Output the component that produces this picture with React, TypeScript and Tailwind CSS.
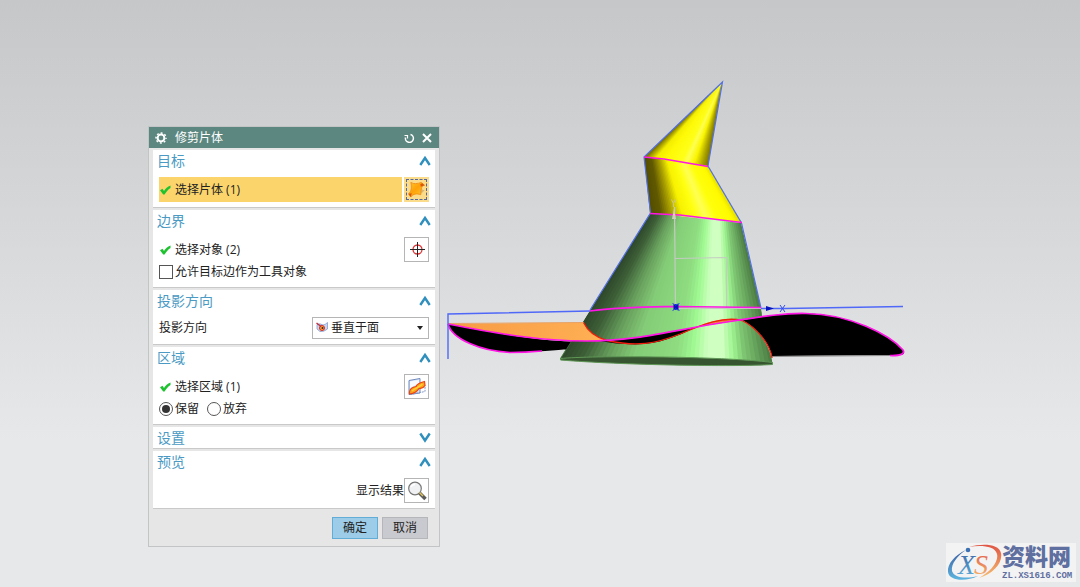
import { useState, type ReactNode } from "react";

type Point = [number, number];
type Stop = [number, number, number, number];

const STRIPS = 48;

const greenStops: Stop[] = [
  [0, 44, 70, 42],
  [0.1, 62, 95, 56],
  [0.22, 103, 158, 92],
  [0.34, 132, 204, 119],
  [0.54, 142, 220, 128],
  [0.62, 160, 250, 146],
  [0.69, 208, 255, 194],
  [0.76, 208, 255, 194],
  [0.81, 160, 246, 146],
  [0.86, 128, 200, 116],
  [0.93, 100, 160, 90],
  [1, 72, 120, 65],
];

const tipStops: Stop[] = [
  [0, 106, 100, 0],
  [0.08, 170, 162, 0],
  [0.18, 244, 238, 0],
  [0.34, 255, 250, 6],
  [0.58, 255, 255, 24],
  [0.66, 255, 255, 84],
  [0.78, 250, 244, 0],
  [0.9, 176, 168, 0],
  [1, 122, 114, 0],
];

const neckStops: Stop[] = [
  [0, 82, 76, 0],
  [0.12, 98, 90, 0],
  [0.24, 170, 160, 0],
  [0.36, 248, 242, 0],
  [0.5, 255, 255, 14],
  [0.62, 255, 255, 84],
  [0.74, 255, 255, 12],
  [0.92, 255, 250, 0],
  [1, 226, 218, 0],
];

const colorAt = (stops: Stop[], t: number) => {
  const i = Math.max(1, stops.findIndex((s) => s[0] >= t));
  const a = stops[i - 1];
  const b = stops[i];
  const k = (t - a[0]) / (b[0] - a[0]);
  const mix = (n: 1 | 2 | 3) => Math.round(a[n] + (b[n] - a[n]) * k);
  return `rgb(${mix(1)},${mix(2)},${mix(3)})`;
};

const lerp = (a: Point, b: Point, t: number) =>
  `${(a[0] + (b[0] - a[0]) * t).toFixed(2)},${(a[1] + (b[1] - a[1]) * t).toFixed(2)}`;

// Ruled surface between a top and a bottom edge. Each strip runs under the next one, so no seams show.
const Surface = ({ top, bottom, stops }: { top: [Point, Point]; bottom: [Point, Point]; stops: Stop[] }) => (
  <g>
    {Array.from({ length: STRIPS }, (_, i) => {
      const t = i / STRIPS;
      const end = Math.min(1, (i + 2) / STRIPS);
      return (
        <polygon
          key={i}
          fill={colorAt(stops, t + 0.5 / STRIPS)}
          points={`${lerp(top[0], top[1], t)} ${lerp(top[0], top[1], end)} ${lerp(bottom[0], bottom[1], end)} ${lerp(bottom[0], bottom[1], t)}`}
        />
      );
    })}
  </g>
);

const Model = () => (
  <svg className="absolute left-[440px] top-[75px] w-[470px]" viewBox="440 75 470 300" fill="none" aria-hidden="true">
    <defs>
      <clipPath id="cone">
        <path d="M650 213L741 223L761 308L762 317L742 320C756 327 770 344 772.500 364C735 367 620 366 560 359Z" />
      </clipPath>
      <linearGradient id="brim" x1="448" x2="607" y1="0" y2="0" gradientUnits="userSpaceOnUse">
        <stop stopColor="#f79b45" />
        <stop offset="1" stopColor="#ffb055" />
      </linearGradient>
    </defs>

    <path fill="#000" d="M738 320C765 316 785 313 806 313.500C850 314 890 335 904 351Q905 355 900 355L772 356C768 340 756 327 738 320Z" />
    <path stroke="#8d8d8d" d="M772 356.500L890 355.500" />
    <g clipPath="url(#cone)">
      <Surface top={[[650, 213], [741, 223]]} bottom={[[558, 362], [775, 368]]} stops={greenStops} />
    </g>
    <path fill="#375530" stroke="#5f9656" d="M560.500 358.500C590 355.500 720 356 772.500 362.500V364.500C735 367 620 365 560.500 360Z" />
    <path stroke="#4b7b43" d="M583 322L560.500 358.500" />

    <path fill="url(#brim)" d="M448 324L583.500 322.500C588 332 596 337 607 340.500C560 343 500 335 448 324Z" />
    <path stroke="#e8a264" d="M448 323.500L584 322.500" />
    <path fill="#000" d="M448 324C500 334 540 341 571 341.500L566 349.500C555 350 530 352.500 510 352.500C480 351 452 339 448 324Z" />
    <path fill="#000" d="M600 341C635 340 670 332 697 327C675 337 660 344 635 344.500Q615 344 600 341Z" />
    <path fill="#ef8b3c" d="M697 327C710 320 727 318 742 320Z" />
    <path stroke="#f21c0c" strokeWidth="1.300" d="M583.500 322.500C588 332 598 338 607 340.500C637 347 655 344 680 334C703 324 724 316 742 320.500C756 327 770 344 772 358" />
    <path stroke="#ff15e6" strokeWidth="1.700" d="M448 324C500 334 540 341 586 341C640 341 677 329 730 321.500C765 316 785 313 806 313.500C850 314 890 335 903 350Q906 356 890 355.500" />
    <path stroke="#ff15e6" strokeWidth="1.700" d="M448 324C452 339 480 351 510 352.500Q525 352.500 542 351" />

    <Surface top={[[722, 82], [722, 82]]} bottom={[[644, 157], [708, 166]]} stops={tipStops} />
    <Surface top={[[644, 157], [708, 166]]} bottom={[[650, 213], [741, 222]]} stops={neckStops} />
    <path stroke="#5370e8" strokeWidth="1.200" d="M708 166L722.500 82L644 157L650.500 213L590 310M708 166L741.500 223L761 308" />
    <path stroke="#ff15e6" strokeWidth="1.700" d="M644 157L664 159L708 166.500M650 213.500L680 215L742 222.500" />

    <path stroke="#c5cbc3" strokeWidth="1.200" d="M674.500 207L675.500 306M675 258.500L726.500 257.500V308M676 308.500H762" />
    <path fill="#d2d0bd" d="M674 208L676 219H672Z" />
    <path stroke="#c9c49a" d="M671.500 199.500L673.500 203.500V207M675.500 199.500L673.500 203.500" />

    <path stroke="#5068f8" strokeWidth="1.400" d="M448 359V314L590 311M761 308.500L785 308.500L903 306.500" />
    <path stroke="#ff15e6" strokeWidth="1.600" d="M590 311C620 307 650 307 676 306.500L761 307.500" />
    <path fill="#0713bd" d="M673.500 304H678.500V310H673.500ZM766 306L774 308.500L766 311Z" />
    <path stroke="#324ae8" d="M672.500 303.500L675.500 305L679.500 303.500M672.500 310.500L675.500 309L679.500 310.500M780 305L785 312M785 305L780 312" />
  </svg>
);

const Chevron = ({ open }: { open: boolean }) => (
  <svg className="h-3 w-3" viewBox="0 0 12 12" fill="none" stroke="#2f8fbd" strokeWidth="2.400">
    <path d={open ? "M1.300 10L6 3L10.700 10" : "M1.300 1.500L6 8.500L10.700 1.500"} />
  </svg>
);

const Check = () => (
  <svg className="mr-1 h-3 w-3 shrink-0" viewBox="0 0 12 12" fill="#1ec22f" aria-hidden="true">
    <path d="M1 6.200L3.500 4.800L5 7C6.500 4.500 8.500 2.500 11.500 1.500V4C9 5.500 7 8 5.600 10.500H4.200Z" />
  </svg>
);

const SheetIcon = () => (
  <svg className="h-[19px] w-[19px]" viewBox="0 0 20 20">
    <defs>
      <linearGradient id="sheet" x1="0" y1="0" x2="1" y2="1">
        <stop stopColor="#ffc52c" />
        <stop offset=".45" stopColor="#ffa209" />
        <stop offset="1" stopColor="#ffd02e" />
      </linearGradient>
    </defs>
    <path d="M14 9L18.500 11L14 15Z" fill="#d9b778" />
    <path d="M4 2.500C7 4.500 11 4 15 2.500L18.500 5.500C15.500 6 14.500 9 14.500 15.500C10 14 6.500 14.500 4 18L1.500 14.500C5 12 5 7 4 2.500Z" fill="url(#sheet)" stroke="#ee8510" strokeWidth=".800" />
    <path d="M14 4.500L16 3.500L18.500 5.500L14.500 7ZM1.500 14.500L5 14L4 18Z" fill="#d9570c" />
  </svg>
);

const TargetIcon = () => (
  <svg className="h-4 w-4" viewBox="0 0 16 16" fill="none">
    <circle cx="8.500" cy="7.500" r="4.500" stroke="#e03030" strokeWidth="1.300" />
    <path d="M1 7.500H16M8.500 0V15" stroke="#242424" />
  </svg>
);

const RegionIcon = () => (
  <svg className="h-5 w-5" viewBox="0 0 20 20" fill="none">
    <path d="M2 3.500L13 1.500V16L2 17.500Z" fill="#d7e4fa" stroke="#7189ba" />
    <path d="M3 4.500L12 3V6L3 11Z" fill="#f6faff" />
    <path d="M3 17.500L18 14.500V8" stroke="#8396c2" strokeDasharray="2 1" />
    <path d="M2.500 15C3 11 6 10 9 9.500C10 7 12 6 17.500 4.500L18 8.500C16 12 14 11 12 11.500C10 15 7 16.500 2.500 17Z" fill="#ffa31a" stroke="#e94618" strokeWidth="1.200" />
    <path d="M5 14C8 11 13 10 15.500 7" stroke="#ffd238" strokeWidth="1.500" />
  </svg>
);

const MagnifierIcon = () => (
  <svg className="h-5 w-5" viewBox="0 0 20 20" fill="none">
    <circle cx="8" cy="7.500" r="6.300" fill="#f0f1f3" stroke="#777" strokeWidth="1.200" />
    <path d="M4 6Q5 3.500 8 3.500" stroke="#fff" strokeWidth="1.500" />
    <path d="M12.500 12L18.500 18" stroke="#5c5c5c" strokeWidth="3.500" />
    <path d="M12.500 11.500L16 15" stroke="#e0c258" strokeWidth="1.500" />
  </svg>
);

const VectorIcon = () => (
  <svg className="pointer-events-none absolute left-1 top-1 h-3 w-3" viewBox="0 0 12 12" fill="none" aria-hidden="true">
    <path d="M1 3.500Q4 2 7 4Q9 4 11.500 1.500V8Q8 11 4 10.500L1 8Z" fill="#c8d6f2" stroke="#889dca" strokeWidth=".800" />
    <circle cx="6" cy="7" r="2.500" fill="#f9a02c" stroke="#d52a20" />
    <path d="M.5 2L5 5.500" stroke="#bf3440" strokeWidth="1.500" />
    <circle cx="6.500" cy="7" r="1" fill="#332634" />
  </svg>
);

const Section = ({ title, children }: { title: string; children?: ReactNode }) => (
  <section className="border-b border-[#c9c9c9] bg-white">
    <button type="button" className="flex h-[21px] w-full items-center justify-between px-1 text-sm text-[#4a9ac4]">
      {title}
      <Chevron open={Boolean(children)} />
    </button>
    {children && <div className="px-1.5 pb-[5px] pt-1.5">{children}</div>}
  </section>
);

const IconButton = ({ label, children }: { label: string; children: ReactNode }) => (
  <button type="button" aria-label={label} className="flex h-[25px] w-[25px] shrink-0 items-center justify-center border border-[#b5b5b5] bg-white">
    {children}
  </button>
);

const radioClass =
  "mr-0.5 h-3.5 w-3.5 appearance-none rounded-full border border-[#555] bg-white p-0.5 before:block before:h-full before:w-full before:rounded-full checked:before:bg-[#333]";

const Dialog = () => {
  const [keep, setKeep] = useState(true);

  return (
    <div role="dialog" aria-labelledby="title" className="absolute left-[148px] top-[126px] w-[292px] border border-[#c2c4c5] bg-[#e6e6e6]">
      <header className="flex h-[21px] items-center bg-[#5c8780] pl-1.5 pr-1.5 text-white">
        <svg className="h-3 w-3" viewBox="0 0 12 12" fill="none" stroke="currentColor" aria-hidden="true">
          <circle cx="6" cy="6" r="3.400" strokeWidth="2" />
          <circle cx="6" cy="6" r="5" strokeWidth="1.500" strokeDasharray="1.900 2.027" strokeDashoffset=".950" />
        </svg>
        <h1 id="title" className="ml-2 flex-1">修剪片体</h1>
        <button type="button" aria-label="重置">
          <svg className="h-3 w-3" viewBox="0 0 12 12" fill="none" stroke="currentColor" strokeWidth="1.500">
            <path d="M2.500 5.500A4 4 0 1 0 7.500 2.500" />
            <path d="M1.500 3.500H4.500V6.500" strokeWidth="1.200" />
          </svg>
        </button>
        <button type="button" aria-label="关闭" className="ml-1.5">
          <svg className="h-3 w-3" viewBox="0 0 12 12" stroke="currentColor" strokeWidth="2">
            <path d="M2 2L10 10M10 2L2 10" />
          </svg>
        </button>
      </header>

      <div className="flex flex-col gap-0.5 px-1 pt-0.5">
        <Section title="目标">
          <div className="flex gap-0.5">
            <div className="flex flex-1 items-center bg-[#fbd56c]">
              <Check />选择片体 (1)
            </div>
            <button type="button" aria-label="选择片体" className="flex h-[25px] w-[25px] items-center justify-center border-2 border-[#fbdc8b] bg-[#fbdc8b]">
              <span className="flex items-center justify-center border border-dashed border-[#5368a0]">
                <SheetIcon />
              </span>
            </button>
          </div>
        </Section>

        <Section title="边界">
          <div className="flex items-center">
            <Check />
            <span className="flex-1">选择对象 (2)</span>
            <IconButton label="选择对象"><TargetIcon /></IconButton>
          </div>
          <label className="flex h-5 items-center">
            <input type="checkbox" className="mr-0.5 h-3.5 w-3.5 appearance-none border border-[#555] bg-white checked:bg-[#555]" />
            允许目标边作为工具对象
          </label>
        </Section>

        <Section title="投影方向">
          <div className="flex items-center justify-between">
            <label htmlFor="direction">投影方向</label>
            <div className="relative w-[117px]">
              <select id="direction" className="h-[22px] w-full appearance-none border border-[#b5b5b5] bg-white pl-[18px]">
                <option>垂直于面</option>
              </select>
              <VectorIcon />
              <svg className="pointer-events-none absolute right-1.5 top-[9px] h-1 w-1.5" viewBox="0 0 6 4" aria-hidden="true">
                <path d="M0 0H6L3 4Z" fill="#222" />
              </svg>
            </div>
          </div>
        </Section>

        <Section title="区域">
          <div className="flex items-center">
            <Check />
            <span className="flex-1">选择区域 (1)</span>
            <IconButton label="选择区域"><RegionIcon /></IconButton>
          </div>
          <div className="flex h-5 items-center gap-2">
            <label className="flex items-center">
              <input type="radio" name="region" checked={keep} onChange={() => setKeep(true)} className={radioClass} />
              保留
            </label>
            <label className="flex items-center">
              <input type="radio" name="region" checked={!keep} onChange={() => setKeep(false)} className={radioClass} />
              放弃
            </label>
          </div>
        </Section>

        <Section title="设置" />

        <Section title="预览">
          <div className="flex items-center justify-end">
            显示结果
            <IconButton label="显示结果"><MagnifierIcon /></IconButton>
          </div>
        </Section>
      </div>

      <footer className="flex justify-end gap-1 pb-[7px] pr-[11px] pt-2">
        <button type="button" className="h-[22px] w-[46px] border border-[#62add7] bg-[#9ccce8]">确定</button>
        <button type="button" className="h-[22px] w-[46px] border border-[#b5b6ba] bg-[#c9cacf]">取消</button>
      </footer>
    </div>
  );
};

const Watermark = () => (
  <div className="absolute bottom-[5px] right-1 flex h-[39px] w-[130px] items-center bg-[#f3f3f4]">
    <svg className="h-[39px] w-14 shrink-0" viewBox="0 0 56 39" fill="none">
      <defs>
        <linearGradient id="swooshBlue" x1="0" y1="0" x2="0" y2="1">
          <stop stopColor="#3b5ea1" />
          <stop offset="1" stopColor="#5eb5df" />
        </linearGradient>
        <linearGradient id="swooshOrange" x1="0" y1="0" x2="0" y2="1">
          <stop stopColor="#df5545" />
          <stop offset="1" stopColor="#f6bf70" />
        </linearGradient>
      </defs>
      <path fill="url(#swooshBlue)" d="M20 7C9 12 1 21 2 29C3 38 20 39 32 33C20 36 8 35 6 28C5 21 11 13 20 7Z" />
      <path fill="url(#swooshOrange)" d="M23 4C37 0 53 1 55 10C57 20 47 31 33 35C44 29 53 19 51 11C49 3 35 2 23 4Z" />
      <circle cx="22" cy="7" r="2.300" fill="#3d70b2" />
      <text x="12" y="31" fontFamily="Liberation Serif, serif" fontStyle="italic" fontSize="28" fill="url(#swooshBlue)">X</text>
      <text x="28" y="31" fontFamily="Liberation Serif, serif" fontStyle="italic" fontSize="28" fill="url(#swooshOrange)">S</text>
    </svg>
    <div className="text-[#5f6fa0]">
      <p className="font-['Liberation_Sans','Noto_Sans_CJK_SC',sans-serif] text-[23px] font-black leading-[27px]">资料网</p>
      <p className="font-['Liberation_Mono',monospace] text-[9px] font-bold leading-[11px]">ZL.XS1616.COM</p>
    </div>
  </div>
);

export default function App() {
  return (
    <main className="relative min-h-screen overflow-hidden bg-linear-to-b from-[#c6c7c8] to-[#e7e8ea] to-75% font-['Open_Sans','Noto_Sans_CJK_SC',sans-serif] text-xs text-[#222]">
      <Model />
      <Dialog />
      <Watermark />
    </main>
  );
}
